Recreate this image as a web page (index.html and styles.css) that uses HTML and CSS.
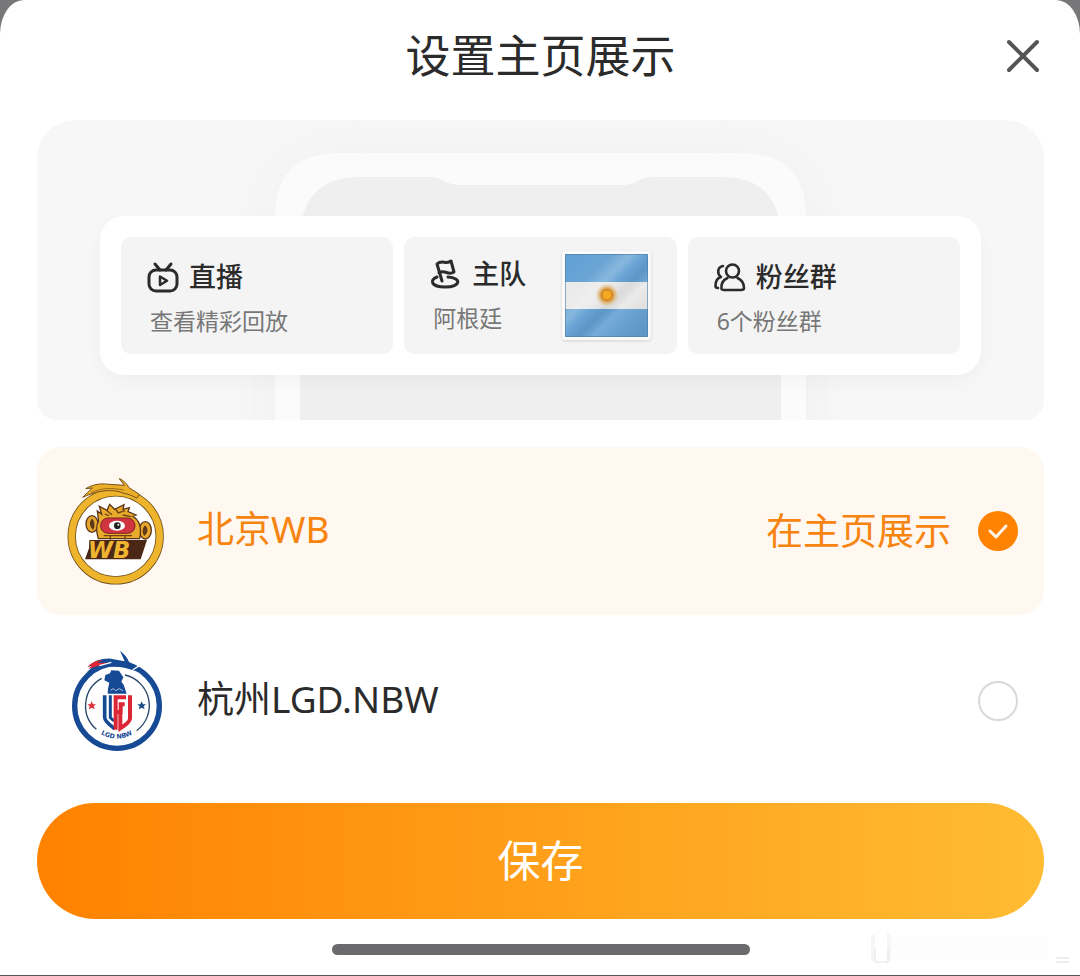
FILE: index.html
```html
<!DOCTYPE html>
<html lang="zh-CN">
<head>
    <meta charset="UTF-8">
    <meta name="viewport" content="width=device-width, initial-scale=1.0">
    <title>设置主页展示</title>
    <link rel="stylesheet" href="styles.css">
</head>
<body>
    <form class="sheet">
        <header class="header">
            <h1>设置主页展示</h1>
            <button class="close" type="button" aria-label="关闭">
                <svg width="34" height="34" viewBox="0 0 34 34" fill="none" stroke="#555" stroke-width="4" stroke-linecap="round">
                    <path d="M3 3L31 31M31 3L3 31"/>
                </svg>
            </button>
        </header>

        <section class="preview">
            <!-- phone outline behind the cards -->
            <svg class="phone" viewBox="0 0 1007 300" preserveAspectRatio="xMidYMid slice">
                <defs>
                    <filter id="soft" x="-30%" y="-30%" width="160%" height="160%"><feGaussianBlur stdDeviation="22"/></filter>
                </defs>
                <rect x="232" y="32" width="543" height="400" rx="70" fill="#eee" opacity=".7" filter="url(#soft)"/>
                <path d="M238 300V97Q238 33 302 33H705Q769 33 769 97V300Z" fill="#fbfbfb"/>
                <path d="M263 300V112Q268 57 322 57H392C406 57 408 65 424 65H584C600 65 602 57 616 57H686Q739 57 744 112V300Z" fill="#efefef"/>
            </svg>
            <div class="cards">
                <div class="card">
                    <div class="card-title">
                        <svg width="32" height="32" viewBox="0 0 32 32" fill="none" stroke="#2b2b2b" stroke-width="3" stroke-linecap="round" stroke-linejoin="round">
                            <rect x="2" y="9" width="28" height="21" rx="7"/>
                            <path d="M8 3L13 9M24 3L19 9"/>
                            <path d="M13 15.500V24L20 19.700Z" stroke-width="2.500"/>
                        </svg>
                        <b>直播</b>
                    </div>
                    <p>查看精彩回放</p>
                </div>
                <div class="card">
                    <div class="card-text">
                        <div class="card-title">
                            <svg width="32" height="32" viewBox="0 0 32 32" fill="none" stroke="#2b2b2b" stroke-width="3" stroke-linecap="round" stroke-linejoin="round">
                                <path d="M12 23L7 6C12 1 16 7 21 3L24 14C18 18 15 11 9 15"/>
                                <path d="M7 19C-1 22 1 29 15 29C31 29 32 20 18 19"/>
                            </svg>
                            <b>主队</b>
                        </div>
                        <p>阿根廷</p>
                    </div>
                    <svg class="flag" viewBox="0 0 83 83">
                        <defs>
                            <linearGradient id="shine" x1="0" y1="0" x2="1" y2="1">
                                <stop offset="0" stop-color="#fff" stop-opacity="0"/>
                                <stop offset=".28" stop-color="#fff" stop-opacity=".05"/>
                                <stop offset=".4" stop-color="#fff" stop-opacity=".25"/>
                                <stop offset=".48" stop-color="#fff" stop-opacity=".05"/>
                                <stop offset=".56" stop-color="#000" stop-opacity=".06"/>
                                <stop offset=".66" stop-color="#fff" stop-opacity=".12"/>
                                <stop offset="1" stop-color="#000" stop-opacity=".06"/>
                            </linearGradient>
                            <radialGradient id="sun">
                                <stop offset="0" stop-color="#f3a526"/>
                                <stop offset=".5" stop-color="#d9973a"/>
                                <stop offset="1" stop-color="#e5c896" stop-opacity="0"/>
                            </radialGradient>
                        </defs>
                        <rect width="83" height="83" fill="#62a0d3"/>
                        <rect y="28" width="83" height="27" fill="#e9e9ea"/>
                        <rect width="83" height="83" fill="url(#shine)"/>
                        <circle cx="42" cy="41" r="12" fill="url(#sun)"/>
                        <circle cx="42" cy="41" r="5" fill="#f6a821" stroke="#c77d20"/>
                        <rect x=".5" y=".5" width="82" height="82" fill="none" stroke="#4c7ca5" stroke-opacity=".6"/>
                    </svg>
                </div>
                <div class="card">
                    <div class="card-title">
                        <svg width="32" height="32" viewBox="0 0 32 32" fill="none" stroke="#2b2b2b" stroke-width="2.600" stroke-linecap="round" stroke-linejoin="round">
                            <circle cx="18.500" cy="10" r="6.500"/>
                            <path d="M13.500 17C9 19 7 23 7.500 28Q8 29 10 29H27Q30 29 30 27C30 22 28 19 23.500 17"/>
                            <path d="M9 5C3 6 3 13 7 16C3 17 1.500 21 1.500 25Q1.500 27 4 27"/>
                        </svg>
                        <b>粉丝群</b>
                    </div>
                    <p>6个粉丝群</p>
                </div>
            </div>
        </section>

        <div class="teams">
            <label class="team">
                <svg class="logo" viewBox="50 38 300 322">
                    <circle cx="196" cy="215" r="132" fill="#fff" stroke="#70501a" stroke-width="25"/>
                    <circle cx="196" cy="215" r="132" fill="none" stroke="#edb42c" stroke-width="20"/>
                    <path d="M97 98L126 70L106 72C135 55 158 57 178 59L222 62L207 42C219 46 230 58 236 69L267 89L259 101C238 87 222 88 203 80C164 73 130 83 97 98Z" fill="#eaae29" stroke="#765019" stroke-width="3"/>
                    <path d="M122 84C155 69 185 69 220 76" fill="none" stroke="#765019" stroke-width="2"/>
                    <g stroke="#5b3519" stroke-width="4">
                        <ellipse cx="125" cy="178" rx="18" ry="25" fill="#e6a72c"/>
                        <ellipse cx="285" cy="197" rx="18" ry="26" fill="#e6a72c"/>
                        <path d="M125 164Q115 180 128 192Q134 179 125 164M285 184Q295 200 282 211Q275 196 285 184" fill="#633b20"/>
                        <path d="M144 222Q133 187 145 169L141 139L154 149L147 125L170 137L178 119L193 134L221 120L218 134L237 129L233 141L257 151L248 155Q278 173 268 222Z" fill="#e9ab2c"/>
                    </g>
                    <path d="M168 137L185 150M194 131L204 145L224 138M217 151L243 156M163 148L176 153" stroke="#704217" stroke-width="4" fill="none"/>
                    <rect x="151" y="160" width="103" height="46" rx="22" fill="#cf3440" stroke="#7a2424" stroke-width="3"/>
                    <ellipse cx="200" cy="183" rx="24" ry="15" fill="#fff"/>
                    <circle cx="201" cy="183" r="10" fill="#222"/>
                    <circle cx="204" cy="180" r="3" fill="#fff"/>
                    <path d="M160 213H245M180 213V225M224 213V225" stroke="#704217" stroke-width="4"/>
                    <path d="M117 226H290L271 284H104L116 251Z" fill="#4b2815"/>
                    <text class="logo-wb" x="113" y="279">WB</text>
                </svg>
                <span class="name">北京WB</span>
                <span class="state">在主页展示</span>
                <input type="radio" name="team" checked>
            </label>
            <label class="team">
                <svg class="logo" viewBox="51 30 300 304">
                    <defs><path id="arc" d="M130 265Q200 325 270 265"/></defs>
                    <circle cx="201" cy="197" r="127" fill="#fff" stroke="#174a94" stroke-width="16"/>
                    <path d="M114 80Q139 53 183 55L224 63L210 31Q231 47 237 65L263 82L257 92Q220 79 195 79Q155 73 108 98L134 74Z" fill="#174a94"/>
                    <path d="M112 80Q132 58 158 60L142 68L182 67L145 76L115 86L126 75Z" fill="#df2735"/>
                    <path d="M148 76L184 66M248 89L268 76" stroke="#fff" stroke-width="4"/>
                    <path d="M155 114A94 94 0 0 0 139 267M225 104A94 94 0 0 1 260 271" fill="none" stroke="#29466c" stroke-width="4"/>
                    <path d="M174 145L178 127L163 120L166 104L180 99L184 90L207 91L220 111L214 124L221 133L230 160H173Z" fill="#174a94"/>
                    <path d="M181 150L190 145L197 151L208 145L219 151" fill="none" stroke="#fff" stroke-width="2"/>
                    <path d="M164 165V231Q164 244 194 265" fill="none" stroke="#174a94" stroke-width="11"/>
                    <path d="M181 165V232L192 242" fill="none" stroke="#174a94" stroke-width="9"/>
                    <path d="M228 171H197V268M224 192H212V215H201M240 165V235Q239 247 211 264V217" fill="none" stroke="#dc2535" stroke-width="12"/>
                    <path d="M125 183L129 192H138L131 198L134 207L125 202L116 207L119 198L112 192H121Z" fill="#dc3038"/>
                    <path d="M275 183L279 192H288L281 198L284 207L275 202L266 207L269 198L262 192H271Z" fill="#1b4b88"/>
                    <text class="logo-lgd"><textPath href="#arc" startOffset="50%">LGD NBW</textPath></text>
                </svg>
                <span class="name">杭州LGD.NBW</span>
                <input type="radio" name="team">
            </label>
        </div>

        <button class="save" type="submit">保存</button>
        <div class="home-bar"></div>

        <svg class="smudge" width="206" height="46" viewBox="0 0 206 46" fill="none">
            <path d="M24 8H182V30H24Z" fill="#fdfdfd"/>
            <path d="M7 6V32M23 4V32" stroke="#f6f6f6" stroke-width="4"/>
            <path d="M9 20V33H22V20" stroke="#e4e4e4"/>
            <path d="M190 29H203M190 33H203" stroke="#ddd"/>
        </svg>
    </form>
</body>
</html>
```

FILE: styles.css
```css
* {
    box-sizing: border-box;
}
body {
    margin: 0;
    min-height: 100vh;
    display: flex;
    background-color: #777679;
    font-family: "Noto Sans", "Noto Sans CJK SC", sans-serif;
    color: #2b2b2b;
}
h1, p {
    margin: 0;
}
.sheet {
    position: relative;
    flex: 1;
    display: flex;
    flex-direction: column;
    padding: 0 36px 20px 37px;
    background-color: #fff;
    border-radius: 24px 24px 0 0 / 34px 34px 0 0;
    border-bottom: 1px solid #555;
}
.header {
    display: grid;
    grid-template-columns: 1fr auto 1fr;
    align-items: center;
    height: 120px;
    padding-bottom: 8px;
}
.header h1 {
    grid-column: 2;
    font-size: 45px;
    line-height: 60px;
    font-weight: 400;
}
.close {
    justify-self: end;
    display: flex;
    padding: 4px;
    border: 0;
    background: none;
}
.preview {
    position: relative;
    display: flex;
    flex-direction: column;
    height: 300px;
    padding: 96px 63px 0;
    overflow: hidden;
    background-color: #f7f7f7;
    border-radius: 38px 38px 20px 20px;
}
.phone {
    position: absolute;
    inset: 0;
    width: 100%;
    height: 100%;
}
.cards {
    position: relative;
    display: grid;
    grid-template-columns: repeat(3, 1fr);
    gap: 11px;
    padding: 21px;
    background-color: #fff;
    border-radius: 24px;
    box-shadow: 0 8px 20px rgba(0, 0, 0, 0.03);
}
.card {
    height: 117px;
    padding: 20px 26px;
    background-color: #f4f4f4;
    border-radius: 10px;
}
.card:nth-child(2) {
    display: flex;
    justify-content: space-between;
    align-items: center;
}
.card-title {
    display: flex;
    align-items: center;
    gap: 10px;
    font-size: 27px;
    line-height: 40px;
}
.card-title b {
    font-weight: 500;
}
.card p {
    padding: 4px 3px 0;
    font-size: 23px;
    line-height: 40px;
    color: #777;
}
.flag {
    width: 89px;
    height: 89px;
    border: 3px solid #fafafa;
    border-radius: 4px;
    box-shadow: 0 1px 3px rgba(0, 0, 0, 0.15);
}
.teams {
    display: grid;
    gap: 2px;
    margin: 27px 0 18px;
}
.team {
    display: flex;
    align-items: center;
    height: 168px;
    padding: 0 26px 0 30px;
    border-radius: 24px;
    font-size: 37px;
    line-height: 48px;
}
.team:has(:checked) {
    background-color: #fff8f1;
    color: #f78410;
}
.logo {
    width: 100px;
    height: 108px;
    margin-right: 30px;
}
.logo-wb {
    font: italic 700 68px "DejaVu Sans", sans-serif;
    fill: #efb432;
}
.logo-lgd {
    font: 700 19px "DejaVu Sans", sans-serif;
    fill: #174a94;
    text-anchor: middle;
}
.name {
    flex: 1;
    padding-bottom: 4px;
}
.team input {
    appearance: none;
    width: 40px;
    height: 40px;
    margin: 0 0 0 27px;
    border: 2px solid #d9d9d9;
    border-radius: 50%;
}
.team input:checked {
    border: 0;
    background: #ff8200 url("data:image/svg+xml,%3Csvg xmlns='http://www.w3.org/2000/svg' viewBox='0 0 40 40' fill='none' stroke='%23fff3e6' stroke-width='3' stroke-linecap='round' stroke-linejoin='round'%3E%3Cpath d='M12 20L18 26L28 15'/%3E%3C/svg%3E");
}
.save {
    height: 116px;
    padding: 0 0 6px;
    border: 0;
    border-radius: 58px;
    background: linear-gradient(90deg, #ff8200, #ffbc33);
    color: #fff;
    font-family: inherit;
    font-size: 43px;
}
.home-bar {
    align-self: center;
    width: 418px;
    height: 11px;
    margin-top: 25px;
    background-color: #6b6b6d;
    border-radius: 6px;
}
.smudge {
    position: absolute;
    right: 8px;
    bottom: 0;
}
```
